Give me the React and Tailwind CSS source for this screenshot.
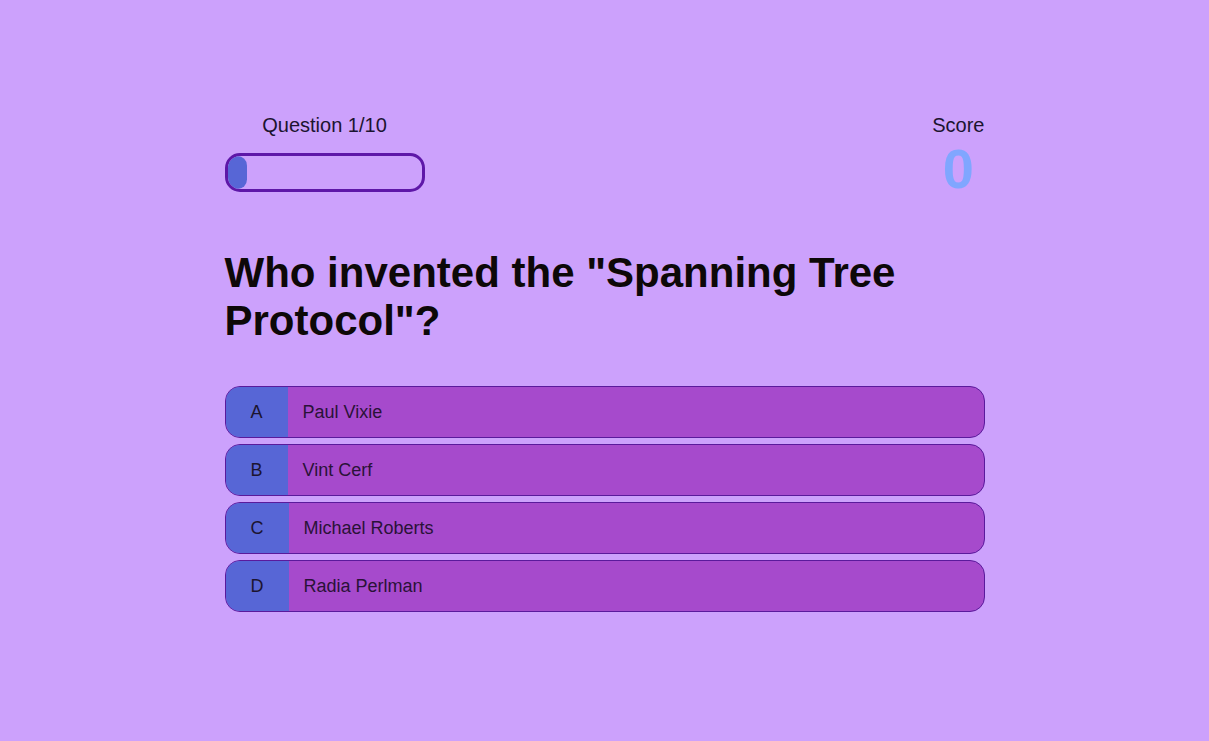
export default function App() {
  const options = [
    ["A", "Paul Vixie"],
    ["B", "Vint Cerf"],
    ["C", "Michael Roberts"],
    ["D", "Radia Perlman"],
  ];
  return (
    <div className="min-h-[741px] w-full bg-[#cca1fc] pt-[114px]" style={{ fontFamily: '"Liberation Sans", Arial, sans-serif' }}>
      <div className="mx-auto w-[760px]">
        <div className="flex justify-between items-start">
          <div className="flex flex-col items-center w-[200px]">
            <div className="text-[20px] leading-[23px] text-[#1c1430]">Question 1/10</div>
            <div className="mt-[16px] h-[39px] w-[200px] rounded-[15px] border-[3px] border-[#5e17a8] p-0 overflow-hidden">
              <div className="h-full w-[10%] rounded-[12px] bg-[#5766d6]"></div>
            </div>
          </div>
          <div className="flex flex-col items-center">
            <div className="text-[20px] leading-[23px] text-[#1c1430]">Score</div>
            <div className="text-[56px] leading-[64px] font-bold text-[#80a6ff]">0</div>
          </div>
        </div>
        <h1 className="mt-[48px] text-[42px] leading-[48px] font-bold text-[#0d0808]">
          Who invented the "Spanning Tree Protocol"?
        </h1>
        <div className="mt-[41px] flex flex-col gap-[6px]">
          {options.map(([l, t]) => (
            <div key={l} className="flex h-[52px] rounded-[15px] border border-[#5a1a9c] overflow-hidden bg-[#a64acc]">
              <div className="flex items-center justify-center px-[25px] bg-[#5766d6] text-[18px] text-[#1c1430]">{l}</div>
              <div className="flex items-center pl-[15px] text-[18px] text-[#2a1238]">{t}</div>
            </div>
          ))}
        </div>
      </div>
    </div>
  );
}
